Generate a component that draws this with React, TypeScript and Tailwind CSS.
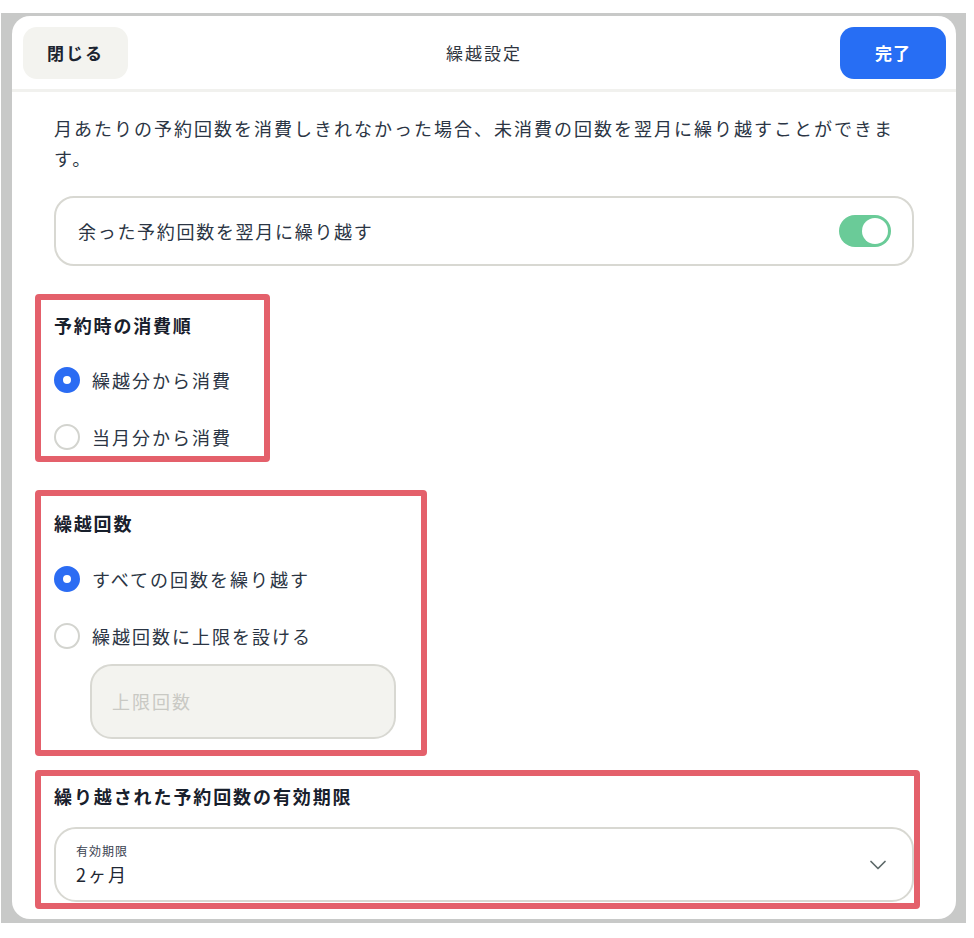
import { ChevronDown } from "lucide-react";

const FONT = "font-['Noto_Sans_CJK_JP','Noto_Sans',sans-serif]";

function Radio({ checked, label }: { checked: boolean; label: string }) {
  return (
    <div className="flex h-[32px] items-center gap-[12px]">
      <span
        className={
          checked
            ? "h-[26px] w-[26px] shrink-0 rounded-full border-[9px] border-[#2b6cf3] bg-white"
            : "h-[26px] w-[26px] shrink-0 rounded-full border-2 border-[#d3d4cf] bg-white"
        }
      />
      <span className="text-[18px] tracking-[2px] text-[#2b3544]">{label}</span>
    </div>
  );
}

function Mark({ className }: { className: string }) {
  // annotation frame drawn over the screenshot
  return (
    <div
      className={`pointer-events-none absolute rounded-[4px] border-[6px] border-[#e4606b] ${className}`}
    />
  );
}

export default function App() {
  return (
    <div className={`min-h-[938px] bg-white pt-[13px] pl-[1px] ${FONT}`}>
      <div className="h-[910px] w-[965px] bg-[#c8c9c8] pt-[3px] pr-[10px] pb-[4px] pl-[11px]">
        <div className="flex h-full flex-col overflow-hidden rounded-[18px] bg-white">
          <header className="flex h-[76px] shrink-0 items-start justify-between border-b-[3px] border-[#f1f1ee] px-[10px] pt-[11px] pl-[11px]">
            <button
              type="button"
              className="h-[52px] w-[105px] rounded-[14px] bg-[#f3f3ef] text-[17px] font-bold tracking-[2px] text-[#1c2430]"
            >
              閉じる
            </button>
            <h1 className="pt-[13px] text-[17px] tracking-[2px] text-[#2f3540]">繰越設定</h1>
            <button
              type="button"
              className="h-[52px] w-[106px] rounded-[14px] bg-[#276ef4] text-[17px] font-bold tracking-[1px] text-white"
            >
              完了
            </button>
          </header>

          <div className="flex flex-col px-[42px]">
            <p className="mt-[21px] pr-[6px] text-[18px] leading-[30px] tracking-[2px] text-[#2b3544]">
              月あたりの予約回数を消費しきれなかった場合、未消費の回数を翌月に繰り越すことができます。
            </p>

            <div className="mt-[23px] flex h-[70px] items-center justify-between rounded-[20px] border-2 border-[#d8d8d2] pr-[21px] pl-[22px]">
              <span className="text-[18px] tracking-[1.7px] text-[#2b3544]">余った予約回数を翌月に繰り越す</span>
              <span className="flex h-[32px] w-[52px] items-center justify-end rounded-full bg-[#6acb98] pr-[3px]">
                <span className="h-[26px] w-[26px] rounded-full bg-white" />
              </span>
            </div>

            <section className="relative mt-[47px]">
              <h2 className="text-[18px] leading-[24px] font-bold tracking-[1.8px] text-[#18202c]">予約時の消費順</h2>
              <div className="mt-[27px] flex flex-col gap-[25px]">
                <Radio checked label="繰越分から消費" />
                <Radio checked={false} label="当月分から消費" />
              </div>
              <Mark className="top-[-19px] left-[-19px] h-[168px] w-[235px]" />
            </section>

            <section className="relative mt-[58px]">
              <h2 className="text-[18px] leading-[24px] font-bold tracking-[1.8px] text-[#18202c]">繰越回数</h2>
              <div className="mt-[28px] flex flex-col gap-[25px]">
                <Radio checked label="すべての回数を繰り越す" />
                <Radio checked={false} label="繰越回数に上限を設ける" />
              </div>
              <div className="mt-[12px] ml-[36px] flex h-[75px] w-[306px] items-center rounded-[22px] border-2 border-[#d8d8d2] bg-[#f3f3ef] pl-[20px]">
                <span className="text-[18px] tracking-[2px] text-[#c9c9c4]">上限回数</span>
              </div>
              <Mark className="top-[-21px] left-[-19px] h-[266px] w-[392px]" />
            </section>

            <section className="relative mt-[45px]">
              <h2 className="text-[18px] leading-[24px] font-bold tracking-[1.9px] text-[#18202c]">
                繰り越された予約回数の有効期限
              </h2>
              <div className="mt-[19px] flex h-[75px] items-center justify-between rounded-[22px] border-2 border-[#d8d8d2] pr-[20px] pl-[20px]">
                <div className="flex flex-col">
                  <span className="text-[12px] leading-[16px] tracking-[1px] text-[#3a4250]">有効期限</span>
                  <span className="mt-[2px] text-[18px] leading-[26px] tracking-[2px] text-[#1f2733]">2ヶ月</span>
                </div>
                <ChevronDown className="h-[28px] w-[28px] text-[#5e6a6a]" strokeWidth={1.5} />
              </div>
              <Mark className="top-[-14px] left-[-19px] h-[139px] w-[885px]" />
            </section>
          </div>
        </div>
      </div>
    </div>
  );
}
